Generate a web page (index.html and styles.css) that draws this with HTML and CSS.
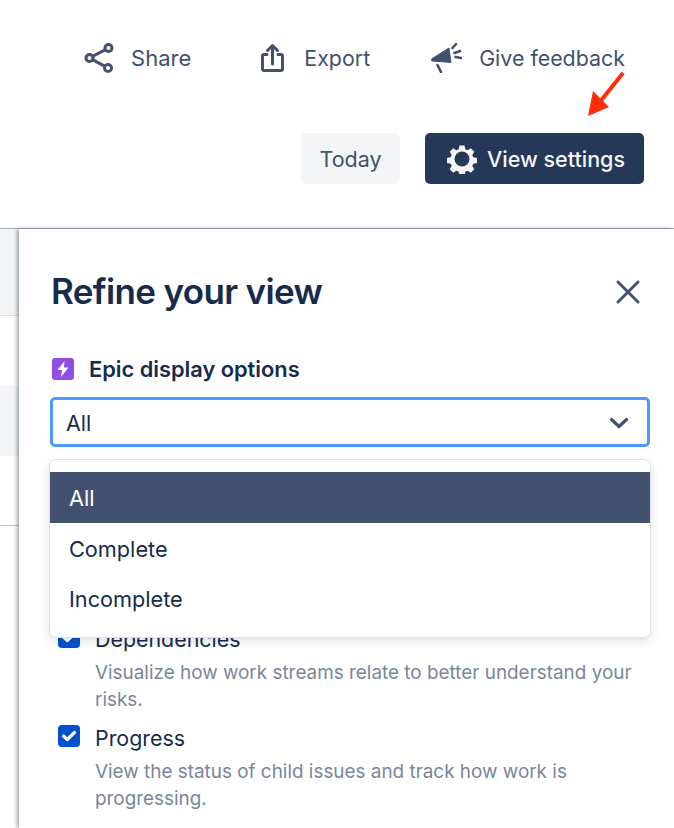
FILE: index.html
```html
<!DOCTYPE html>
<html lang="en">
<head>
  <meta charset="UTF-8" />
  <title>Refine your view</title>
  <link rel="stylesheet" href="styles.css">
</head>
<body>
  <div class="page">
    <!-- Top actions -->
    <div class="top">
      <div class="actions">
        <a class="action action-share" href="#">
          <svg width="30" height="30" viewBox="0 0 30 30" fill="none" stroke="#42526e" stroke-width="3">
            <circle cx="5.500" cy="15" r="3.500"/>
            <circle cx="24.500" cy="5" r="3.500"/>
            <circle cx="24" cy="25" r="3.500"/>
            <path d="M8.500 13.400 21.500 6.600M8.500 16.600 21 23.400"/>
          </svg>
          <span>Share</span>
        </a>
        <a class="action action-export" href="#">
          <svg width="26" height="30" viewBox="0 0 26 30" fill="none" stroke="#42526e" stroke-width="3" stroke-linecap="round" stroke-linejoin="round">
            <path d="M7 11.500H4a1.500 1.500 0 0 0-1.500 1.500v13A1.500 1.500 0 0 0 4 27.500h17a1.500 1.500 0 0 0 1.500-1.500V13a1.500 1.500 0 0 0-1.500-1.500h-3"/>
            <path d="M12.500 21V3M7.500 7.500 12.500 2.500 17.500 7.500"/>
          </svg>
          <span>Export</span>
        </a>
        <a class="action action-feedback" href="#">
          <svg width="32" height="30" viewBox="0 0 32 30" fill="none">
            <path d="M19 5 21 19.500 2.500 18a1.200 1.200 0 0 1-.6-2.200z" fill="#42526e" stroke="#42526e" stroke-linejoin="round"/>
            <path d="M7.500 22 11 29M22.500 5 26 1M24.500 10 30 8M25.500 14 31 15" stroke="#42526e" stroke-width="2.600" stroke-linecap="round"/>
          </svg>
          <span>Give feedback</span>
        </a>
      </div>
      <div class="buttons">
        <button class="btn btn-today">Today</button>
        <button class="btn btn-primary">
          <svg width="30" height="30" viewBox="0 0 30 30">
            <path fill="#f4f5f7" fill-rule="evenodd" d="M12.500 1.500h5l.8 3.700 2.300 1 3.200-2 3.500 3.500-2 3.200 1 2.300 3.700.8v5l-3.700.8-1 2.300 2 3.200-3.500 3.500-3.200-2-2.300 1-.8 3.700h-5l-.8-3.700-2.300-1-3.200 2-3.500-3.500 2-3.200-1-2.300-3.700-.8v-5l3.700-.8 1-2.300-2-3.200 3.500-3.500 3.200 2 2.300-1zM15 7.500a7.500 7.500 0 1 0 0 15 7.500 7.500 0 0 0 0-15z"/>
          </svg>
          View settings
        </button>
      </div>
      <svg class="arrow" width="40" height="48" viewBox="0 0 40 48">
        <path d="M36 2 12 32" stroke="#ff2d0a" stroke-width="4"/>
        <path d="M1 45 6 20 22 36z" fill="#ff2d0a"/>
      </svg>
    </div>

    <div class="main">
      <!-- Table rows behind the panel -->
      <div class="strip">
        <div class="strip-head"></div>
        <div class="strip-row"></div>
        <div class="strip-row strip-grey"></div>
        <div class="strip-row strip-last"></div>
      </div>

      <!-- Settings panel -->
      <div class="panel">
        <div class="panel-head">
          <h1>Refine your view</h1>
          <svg class="close" width="26" height="26" viewBox="0 0 26 26" stroke="#42526e" stroke-width="3" stroke-linecap="round">
            <path d="M3 3 23 23M23 3 3 23"/>
          </svg>
        </div>

        <div class="field-label">
          <span class="epic-icon">
            <svg width="14" height="16" viewBox="0 0 14 16"><path d="M8.500 0 1.500 9H6L5 16l7.500-9.500H8z" fill="#fff"/></svg>
          </span>
          Epic display options
        </div>

        <div class="select-wrap">
          <div class="select">
            <span>All</span>
            <svg width="20" height="14" viewBox="0 0 20 14" fill="none" stroke="#42526e" stroke-width="3.200" stroke-linecap="round" stroke-linejoin="round">
              <path d="M2.500 3.500 10 10.500 17.500 3.500"/>
            </svg>
          </div>
          <div class="menu">
            <div class="menu-item selected">All</div>
            <div class="menu-item">Complete</div>
            <div class="menu-item">Incomplete</div>
          </div>
        </div>

        <div class="checks">
          <div class="check">
            <span class="box">
              <svg width="16" height="12" viewBox="0 0 16 12" fill="none" stroke="#fff" stroke-width="3.200" stroke-linecap="round" stroke-linejoin="round"><path d="M2.500 6 6.300 9.500 13.500 2.500"/></svg>
            </span>
            <div>
              <div class="check-title">Dependencies</div>
              <p>Visualize how work streams relate to better understand your risks.</p>
            </div>
          </div>
          <div class="check">
            <span class="box">
              <svg width="16" height="12" viewBox="0 0 16 12" fill="none" stroke="#fff" stroke-width="3.200" stroke-linecap="round" stroke-linejoin="round"><path d="M2.500 6 6.300 9.500 13.500 2.500"/></svg>
            </span>
            <div>
              <div class="check-title">Progress</div>
              <p>View the status of child issues and track how work is progressing.</p>
            </div>
          </div>
        </div>
      </div>
    </div>
  </div>
</body>
</html>
```

FILE: styles.css
```css
/* Basic Reset */
* {
  margin: 0;
  padding: 0;
  box-sizing: border-box;
}

body {
  font-family: Inter, "Liberation Sans", sans-serif;
  background-color: #fff;
  color: #172b4d;
}

.page {
  width: 674px;
  height: 828px;
  overflow: hidden;
  display: flex;
  flex-direction: column;
}

/* Top actions */
.top {
  height: 228px;
  flex-shrink: 0;
  padding: 43px 30px 0 0;
  position: relative;
}

.actions {
  display: flex;
  justify-content: flex-end;
  padding-right: 19px;
  height: 90px;
}

.action {
  display: flex;
  align-items: flex-start;
  height: 30px;
  color: #42526e;
  font-size: 21.400px;
  line-height: 30px;
  text-decoration: none;
}

.action-share { gap: 17px; margin-right: 69px; font-size: 22px; }
.action-export { gap: 18px; margin-right: 60px; }
.action-feedback { gap: 17px; }

.buttons {
  display: flex;
  justify-content: flex-end;
  gap: 25px;
}

.btn {
  height: 51px;
  border: none;
  border-radius: 5px;
  font-family: inherit;
  font-size: 21.500px;
}

.btn-today {
  width: 99px;
  background-color: #f4f5f7;
  color: #42526e;
}

.btn-primary {
  width: 219px;
  padding-right: 19px;
  background-color: #253858;
  color: #f4f5f7;
  font-weight: 500;
  display: flex;
  align-items: center;
  justify-content: flex-end;
  gap: 10px;
}

.arrow {
  position: absolute;
  left: 587px;
  top: 71px;
}

/* Rows behind the panel */
.main {
  flex: 1;
  display: flex;
  min-height: 0;
  border-top: 1px solid #a5adba;
}

.strip {
  width: 19px;
  flex-shrink: 0;
}

.strip-head {
  height: 87px;
  background-color: #f4f5f7;
  border-bottom: 1px solid #dfe1e6;
}

.strip-row {
  height: 70px;
}

.strip-grey {
  background-color: #f4f5f7;
}

.strip-last {
  border-bottom: 1px solid #c1c7d0;
}

/* Settings panel */
.panel {
  flex: 1;
  background-color: #fff;
  padding: 0 24px 0 32px;
  box-shadow: -2px 0 4px rgba(9, 30, 66, 0.4);
}

.panel-head {
  display: flex;
  justify-content: space-between;
  align-items: center;
  height: 124px;
  padding-right: 9px;
}

.panel-head h1 {
  font-size: 35px;
  font-weight: 600;
  letter-spacing: -0.65px;
  color: #172b4d;
}

.close {
  margin-top: 1px;
}

.field-label {
  display: flex;
  align-items: center;
  gap: 15px;
  height: 32px;
  font-size: 21.800px;
  font-weight: 600;
  color: #172b4d;
}

.epic-icon {
  width: 22px;
  height: 22px;
  margin-left: 1px;
  border-radius: 3px;
  background-color: #904ee2;
  display: flex;
  align-items: center;
  justify-content: center;
}

.select-wrap {
  position: relative;
  margin-left: -1px;
  margin-top: 12px;
}

.select {
  height: 50px;
  border: 3px solid #4c9aff;
  border-radius: 5px;
  padding: 1px 18px 0 13px;
  display: flex;
  align-items: center;
  justify-content: space-between;
  font-size: 21.500px;
}

.menu {
  position: absolute;
  left: -1px;
  top: 62px;
  width: 602px;
  height: 179px;
  padding-top: 12px;
  background-color: #fff;
  border: 1.500px solid #dfe1e6;
  border-radius: 7px;
  box-shadow: 0 4px 10px rgba(9, 30, 66, 0.12);
  z-index: 2;
}

.menu-item {
  height: 50.500px;
  line-height: 50px;
  padding: 1px 0 0 19px;
  font-size: 21.700px;
}

.menu-item.selected {
  background-color: #42526e;
  color: #fff;
}

/* Checkbox rows */
.checks {
  margin-top: 177px;
  padding-left: 7px;
}

.check {
  display: flex;
  gap: 15px;
  margin-bottom: 10px;
}

.box {
  width: 22px;
  height: 22px;
  flex-shrink: 0;
  margin-top: 2px;
  border-radius: 4px;
  background-color: #0052cc;
  display: flex;
  align-items: center;
  justify-content: center;
}

.check-title {
  font-size: 21.400px;
  line-height: 30px;
}

.check p {
  margin-top: 5px;
  font-size: 18.900px;
  line-height: 27px;
  color: #7a869a;
}
```
